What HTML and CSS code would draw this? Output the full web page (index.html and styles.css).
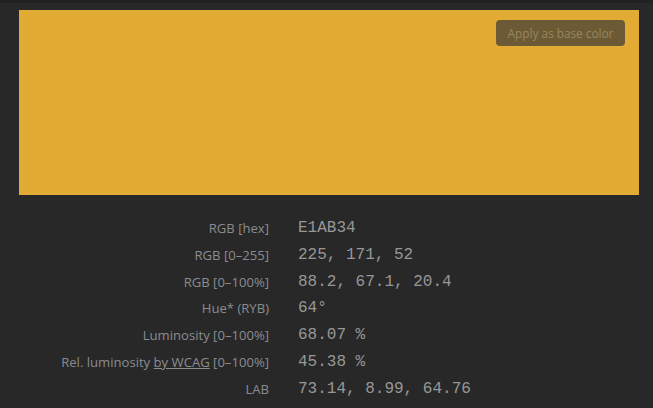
FILE: index.html
```html
<!DOCTYPE html>
<html>
<head>
<meta charset="utf-8">
<link rel="stylesheet" href="styles.css">
</head>
<body>
<div class="topbar"></div>
<div class="page">
  <div class="swatch">
    <button class="apply">Apply as base color</button>
  </div>
  <div class="info">
    <div class="label">RGB [hex]</div><div class="value">E1AB34</div>
    <div class="label">RGB [0–255]</div><div class="value">225, 171, 52</div>
    <div class="label">RGB [0–100%]</div><div class="value">88.2, 67.1, 20.4</div>
    <div class="label">Hue* (RYB)</div><div class="value">64°</div>
    <div class="label">Luminosity [0–100%]</div><div class="value">68.07 %</div>
    <div class="label">Rel. luminosity <a class="link" href="#">by WCAG</a> [0–100%]</div><div class="value">45.38 %</div>
    <div class="label">LAB</div><div class="value">73.14, 8.99, 64.76</div>
  </div>
</div>
</body>
</html>
```
FILE: styles.css
```css
html, body {
  margin: 0;
  padding: 0;
  background: #282828;
  height: 100%;
  overflow: hidden;
}
.topbar {
  height: 3px;
  background: #222222;
}
.page {
  padding: 7px 14px 0 19px;
}
.swatch {
  background: #e1ab34;
  height: 185px;
  display: flex;
  justify-content: flex-end;
  align-items: flex-start;
  padding: 10px 14px 0 0;
  box-sizing: border-box;
}
.apply {
  width: 129px;
  height: 26px;
  border: none;
  border-radius: 4px;
  background: #6b5a35;
  color: #98875c;
  font-family: "Open Sans", "Noto Sans", sans-serif;
  font-size: 11.8px;
  padding: 0;
  line-height: 26px;
}
.info {
  display: grid;
  grid-template-columns: 250px auto;
  grid-auto-rows: 26.83px;
  column-gap: 29px;
  margin-top: 19.6px;
  align-items: center;
}
.label {
  text-align: right;
  font-family: "Open Sans", "Noto Sans", sans-serif;
  font-size: 13.1px;
  color: #8a8d90;
  white-space: nowrap;
}
.link {
  color: #8a8d90;
  text-decoration: underline;
}
.value {
  font-family: "Liberation Mono", monospace;
  font-size: 16px;
  color: #979797;
  white-space: nowrap;
}
```
